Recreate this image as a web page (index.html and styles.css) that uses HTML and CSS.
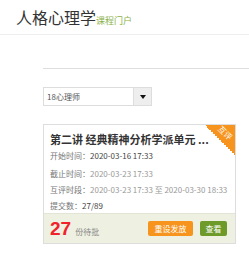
FILE: index.html
```html
<!DOCTYPE html>
<html>
<head>
    <meta charset="UTF-8">
    <title>人格心理学 课程门户</title>
    <link rel="stylesheet" href="styles.css">
</head>
<body>
    <div class="header">
        <h1>人格心理学</h1>
        <span class="header-sub">课程门户</span>
    </div>

    <div class="content">
        <div class="divider"></div>

        <div class="class-select">
            <div class="select-value">18心理师</div>
            <div class="select-btn"><span class="caret"></span></div>
        </div>

        <div class="task-card">
            <div class="ribbon"><span>互评</span></div>
            <div class="task-body">
                <div class="task-title">第二讲 经典精神分析学派单元 ...</div>
                <div class="task-row row-start">
                    <span class="label">开始时间：</span><span class="value dark">2020-03-16 17:33</span>
                </div>
                <div class="task-row row-end">
                    <span class="label">截止时间：</span><span class="value">2020-03-23 17:33</span>
                </div>
                <div class="task-row">
                    <span class="label">互评时段：</span><span class="value">2020-03-23 17:33 至 2020-03-30 18:33</span>
                </div>
                <div class="task-row">
                    <span class="label">提交数：</span><span class="value dark">27/89</span>
                </div>
            </div>
            <div class="task-footer">
                <div class="pending">
                    <span class="pending-count">27</span>
                    <span class="pending-text">份待批</span>
                </div>
                <div class="task-actions">
                    <button class="task-action orange-action">重设发放</button>
                    <button class="task-action green-action">查看</button>
                </div>
            </div>
        </div>
    </div>
</body>
</html>
```

FILE: styles.css
```css
body {
    font-family: "Noto Sans CJK SC", "Liberation Sans", sans-serif;
    margin: 0;
    background: #fff;
    color: #333;
}

.header {
    display: flex;
    align-items: baseline;
    height: 35px;
    box-sizing: border-box;
    padding: 6px 16px 0;
    border-bottom: 1px solid #eee;
}

.header h1 {
    margin: 0;
    font-size: 16px;
    font-weight: 400;
    line-height: 22px;
    color: #333;
}

.header-sub {
    font-size: 9px;
    color: #8cb24b;
}

.content {
    padding-left: 43px;
}

.divider {
    margin-top: 33px;
    border-top: 1px solid #ddd;
}

.class-select {
    display: flex;
    width: 109px;
    height: 19px;
    margin-top: 18px;
    box-sizing: border-box;
    border: 1px solid #ddd;
}

.select-value {
    flex: 1;
    padding-left: 3px;
    font-size: 8px;
    line-height: 17px;
    color: #555;
}

.select-btn {
    width: 17px;
    display: flex;
    align-items: center;
    justify-content: center;
    background: #eee;
    border-left: 1px solid #ddd;
}

.caret {
    width: 0;
    height: 0;
    border-left: 3px solid transparent;
    border-right: 3px solid transparent;
    border-top: 4px solid #111;
}

.task-card {
    position: relative;
    width: 193px;
    margin-top: 18px;
    box-sizing: border-box;
    border: 1px solid #ddd;
}

.ribbon {
    position: absolute;
    top: 0;
    right: 0;
    width: 30px;
    height: 30px;
    background: linear-gradient(to bottom left, #f7941d 50%, transparent 50%);
}

.ribbon span {
    position: absolute;
    top: 3px;
    left: 12px;
    transform: rotate(45deg);
    font-size: 8px;
    line-height: 10px;
    color: #fff;
    white-space: nowrap;
}

.task-body {
    padding: 6px 6px 0;
}

.task-title {
    font-size: 11px;
    font-weight: 700;
    line-height: 16px;
    color: #333;
}

.task-row {
    font-size: 8px;
    line-height: 14px;
    margin-top: 2px;
    white-space: nowrap;
}

.row-start {
    margin-top: 2px;
}

.row-end {
    margin-top: 4px;
}

.label {
    color: #777;
}

.value {
    color: #999;
}

.value.dark {
    color: #444;
}

.task-footer {
    display: flex;
    align-items: center;
    justify-content: space-between;
    height: 29px;
    padding: 0 8px 0 6px;
    background: #eef0e1;
    border-top: 1px solid #e2e4d6;
}

.pending {
    display: flex;
    align-items: baseline;
    gap: 4px;
}

.pending-count {
    font-family: "Liberation Sans", sans-serif;
    font-size: 19px;
    font-weight: 700;
    color: #f0222a;
}

.pending-text {
    font-size: 8px;
    color: #888;
}

.task-actions {
    display: flex;
    gap: 7px;
}

.task-action {
    height: 15px;
    padding: 0 6px;
    border: none;
    border-radius: 2px;
    font-family: "Noto Sans CJK SC", sans-serif;
    font-size: 8px;
    line-height: 15px;
    color: #fff;
    cursor: pointer;
}

.orange-action {
    width: 45px;
    background: #f7941d;
}

.green-action {
    width: 27px;
    padding: 0;
    background: #6e9a2a;
}
```
